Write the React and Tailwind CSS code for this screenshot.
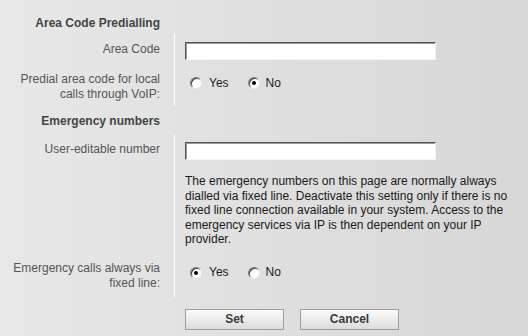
import React from 'react';

const Radio = ({ checked }) => (
  <span className="relative inline-block w-[12px] h-[12px] rounded-full bg-white border border-t-[#7a7a7a] border-l-[#7a7a7a] border-r-[#e8e8e8] border-b-[#e8e8e8] shadow-[inset_1px_1px_0_#404040]">
    {checked && <span className="absolute left-[3px] top-[3px] w-[4px] h-[4px] rounded-full bg-black" />}
  </span>
);

const RadioPair = ({ value }) => (
  <div className="flex items-center h-[22px] pl-[5px]">
    <Radio checked={value === 'yes'} />
    <span className="ml-[7px] text-[#1a1a1a]">Yes</span>
    <span className="ml-[19px] flex items-center">
      <Radio checked={value === 'no'} />
      <span className="ml-[6px] text-[#1a1a1a]">No</span>
    </span>
  </div>
);

const TextField = () => (
  <div className="w-[251px] h-[18px] bg-white border border-t-[#555] border-l-[#555] border-r-[#f4f4f4] border-b-[#f4f4f4] shadow-[inset_1px_1px_0_#9a9a9a]" />
);

const Button = ({ children }) => (
  <button className="w-[99px] h-[21px] border border-[#9e9e9e] bg-gradient-to-b from-[#fbfbfb] to-[#dcdcdc] text-[12px] font-bold text-[#3a3a3a] leading-none">
    {children}
  </button>
);

export default function App() {
  return (
    <div
      className="w-[528px] h-[336px] overflow-hidden bg-gradient-to-r from-[#e8e8e8] to-[#d7d7d7] text-[12px] leading-[15px] text-[#555]"
      style={{ fontFamily: '"Liberation Sans", Arial, sans-serif' }}
    >
      <div className="grid grid-cols-[174px_1fr] pt-[16px]">
        {/* Area Code Predialling */}
        <div className="text-right pr-[14px] font-bold text-[#444] pb-[2px]">Area Code Predialling</div>
        <div />

        <div className="text-right pr-[14px] pt-[9px]">Area Code</div>
        <div className="border-l border-white pl-[10px] pt-[9px] pb-[6px]">
          <TextField />
        </div>

        <div className="text-right pr-[14px] pt-[6px] leading-[15px]">
          Predial area code for local<br />calls through VoIP:
        </div>
        <div className="border-l border-white pl-[10px] pt-[6px] pb-[12px]">
          <RadioPair value="no" />
        </div>

        {/* Emergency numbers */}
        <div className="text-right pr-[14px] font-bold text-[#444] pt-[8px] pb-[6px]">Emergency numbers</div>
        <div />

        <div className="text-right pr-[14px] pt-[7px]">User-editable number</div>
        <div className="border-l border-white pl-[10px] pt-[7px]">
          <TextField />
          <p className="mt-[14px] w-[336px] leading-[14.5px] text-[#1a1a1a]">
            The emergency numbers on this page are normally always dialled via fixed line. Deactivate this setting only if there is no fixed line connection available in your system. Access to the emergency services via IP is then dependent on your IP provider.
          </p>
        </div>

        <div className="text-right pr-[14px] pt-[14px] leading-[15px]">
          Emergency calls always via<br />fixed line:
        </div>
        <div className="border-l border-white pl-[10px] pt-[15px] pb-[13px]">
          <RadioPair value="yes" />
        </div>

        <div />
        <div className="pl-[11px] pt-[12px] flex gap-[16px]">
          <Button>Set</Button>
          <Button>Cancel</Button>
        </div>
      </div>
    </div>
  );
}
